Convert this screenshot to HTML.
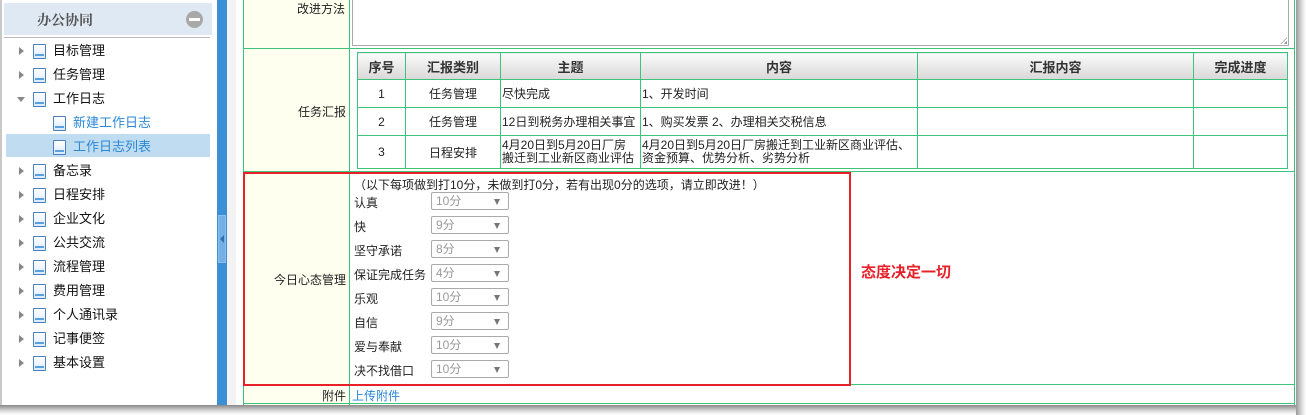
<!DOCTYPE html>
<html><head><meta charset="utf-8"><style>
*{margin:0;padding:0;box-sizing:border-box}
html,body{width:1306px;height:415px;overflow:hidden}
body{background:#fff;font:12px "Liberation Sans","Noto Sans CJK SC",sans-serif;color:#222;position:relative;white-space:nowrap}
.a{position:absolute}
.it{position:absolute;height:24px;width:200px;line-height:24px;font-size:13px;color:#111}
.it span{white-space:nowrap}
.arr{position:absolute;top:8px;width:0;height:0;border-left:5px solid #888;border-top:4px solid transparent;border-bottom:4px solid transparent}
.ic{position:absolute;top:5px;width:13px;height:15px;border:1px solid #4a7fc0;background:linear-gradient(#fff,#dbe9f8);border-radius:1px}
.ic:after{content:"";position:absolute;left:1px;right:1px;bottom:2px;height:2px;background:#5aa0e0}
.sel{position:absolute;width:78px;height:18px;border:1px solid #aaa;border-radius:2px;background:#fff;color:#999;font-size:12px;line-height:16px;padding-left:4px}
.sel:after{content:"";position:absolute;right:8px;top:6px;border-top:6px solid #777;border-left:3px solid transparent;border-right:3px solid transparent}
.lb{position:absolute;left:354px;font-size:12px;color:#222}
td,th{border:1px solid #3cc47c;font-size:12px;padding:0 1px;white-space:normal}
th{background:linear-gradient(#fbfbfb,#d8d8d8);font-weight:bold;color:#333;font-size:13px}
.t{position:absolute;left:53px}
#sb .it{margin-top:2px}
</style></head><body>
<div class="a" style="left:0;top:0;width:2px;height:405px;background:#c8c8c8"></div>
<div class="a" style="left:4px;top:3px;width:208px;height:32px;background:#dfe9f3"></div>
<div class="a" style="left:37px;top:10px;font-size:14px;font-weight:bold;color:#555;font-family:'Noto Serif CJK SC',serif">办公协同</div>
<div class="a" style="left:186px;top:11px;width:17px;height:17px;border-radius:50%;background:#a8a8a8"></div>
<div class="a" style="left:189px;top:18px;width:11px;height:3px;background:#fff"></div>
<div class="a" style="left:4px;top:37px;width:206px;height:1px;background:#bbb"></div>
<div class="a" style="left:6px;top:134px;width:204px;height:23px;background:#c0dcf0"></div>
<div id="sb">
<div class="it" style="top:37px;left:0"><span class="arr" style="left:19px"></span><span class="ic" style="left:33px"></span><span class="t">目标管理</span></div>
<div class="it" style="top:61px;left:0"><span class="arr" style="left:19px"></span><span class="ic" style="left:33px"></span><span class="t">任务管理</span></div>
<div class="it" style="top:85px;left:0"><span class="arr" style="left:17px;top:10px;border-left:4px solid transparent;border-right:4px solid transparent;border-top:5px solid #888;border-bottom:0"></span><span class="ic" style="left:33px"></span><span class="t">工作日志</span></div>
<div class="it" style="top:109px;left:0;color:#2a88d8"><span class="ic" style="left:53px"></span><span class="t" style="left:73px">新建工作日志</span></div>
<div class="it" style="top:133px;left:0;color:#2a88d8"><span class="ic" style="left:53px"></span><span class="t" style="left:73px">工作日志列表</span></div>
<div class="it" style="top:157px;left:0"><span class="arr" style="left:19px"></span><span class="ic" style="left:33px"></span><span class="t">备忘录</span></div>
<div class="it" style="top:181px;left:0"><span class="arr" style="left:19px"></span><span class="ic" style="left:33px"></span><span class="t">日程安排</span></div>
<div class="it" style="top:205px;left:0"><span class="arr" style="left:19px"></span><span class="ic" style="left:33px"></span><span class="t">企业文化</span></div>
<div class="it" style="top:229px;left:0"><span class="arr" style="left:19px"></span><span class="ic" style="left:33px"></span><span class="t">公共交流</span></div>
<div class="it" style="top:253px;left:0"><span class="arr" style="left:19px"></span><span class="ic" style="left:33px"></span><span class="t">流程管理</span></div>
<div class="it" style="top:277px;left:0"><span class="arr" style="left:19px"></span><span class="ic" style="left:33px"></span><span class="t">费用管理</span></div>
<div class="it" style="top:301px;left:0"><span class="arr" style="left:19px"></span><span class="ic" style="left:33px"></span><span class="t">个人通讯录</span></div>
<div class="it" style="top:325px;left:0"><span class="arr" style="left:19px"></span><span class="ic" style="left:33px"></span><span class="t">记事便签</span></div>
<div class="it" style="top:349px;left:0"><span class="arr" style="left:19px"></span><span class="ic" style="left:33px"></span><span class="t">基本设置</span></div>
</div>
<div class="a" style="left:217px;top:0;width:10px;height:405px;background:#3a8fd6"></div>
<div class="a" style="left:218px;top:215px;width:8px;height:48px;background:#72b0e6;border:1px solid #8cc0ec"></div>
<div class="a" style="left:220px;top:235px;border-right:4px solid #2f6fb0;border-top:4px solid transparent;border-bottom:4px solid transparent"></div>
<div class="a" style="left:227px;top:0;width:9px;height:405px;background:#f3f3f3"></div>
<div class="a" style="left:243px;top:0;width:107px;height:405px;background:#fffff0"></div>
<div class="a" style="left:243px;top:0;width:1px;height:405px;background:#3cc47c"></div>
<div class="a" style="left:349px;top:0;width:1px;height:405px;background:#3cc47c"></div>
<div class="a" style="left:1294px;top:0;width:1px;height:405px;background:#3cc47c"></div>
<div class="a" style="left:243px;top:48px;width:1052px;height:1px;background:#3cc47c"></div>
<div class="a" style="left:243px;top:171px;width:1052px;height:1px;background:#3cc47c"></div>
<div class="a" style="left:243px;top:384px;width:1052px;height:1px;background:#3cc47c"></div>
<div class="a" style="left:243px;top:403px;width:1052px;height:1px;background:#3cc47c"></div>
<div class="a" style="left:297px;top:0px;font-size:12px">改进方法</div>
<div class="a" style="left:352px;top:-2px;width:937px;height:48px;border:1px solid #aaa"></div>
<div class="a" style="left:1280px;top:37px;width:7px;height:7px;background:linear-gradient(135deg,transparent 50%,#999 50%,#999 60%,transparent 60%,transparent 75%,#999 75%)"></div>
<div class="a" style="left:298px;top:103px">任务汇报</div>
<table class="a" style="left:357px;top:52px;width:930px;border-collapse:collapse;table-layout:fixed">
<colgroup><col style="width:48px"><col style="width:95px"><col style="width:140px"><col style="width:277px"><col style="width:276px"><col style="width:94px"></colgroup>
<tr style="height:27px"><th>序号</th><th>汇报类别</th><th>主题</th><th>内容</th><th>汇报内容</th><th>完成进度</th></tr>
<tr style="height:28px"><td align="center">1</td><td align="center">任务管理</td><td>尽快完成</td><td>1、开发时间</td><td></td><td></td></tr>
<tr style="height:28px"><td align="center">2</td><td align="center">任务管理</td><td style="white-space:nowrap;overflow:hidden">12日到税务办理相关事宜</td><td>1、购买发票 2、办理相关交税信息</td><td></td><td></td></tr>
<tr style="height:33px"><td align="center">3</td><td align="center">日程安排</td><td style="line-height:13px">4月20日到5月20日厂房<br>搬迁到工业新区商业评估</td><td style="line-height:13px">4月20日到5月20日厂房搬迁到工业新区商业评估、<br>资金预算、优势分析、劣势分析</td><td></td><td></td></tr>
</table>
<div class="a" style="left:243px;top:172px;width:608px;height:214px;border:2px solid #e8202a"></div>
<div class="a" style="left:274px;top:271px">今日心态管理</div>
<div class="lb" style="top:176px">（以下每项做到打10分，未做到打0分，若有出现0分的选项，请立即改进！）</div>
<div class="lb" style="top:194px">认真</div><div class="sel" style="left:431px;top:192px">10分</div>
<div class="lb" style="top:218px">快</div><div class="sel" style="left:431px;top:216px">9分</div>
<div class="lb" style="top:242px">坚守承诺</div><div class="sel" style="left:431px;top:240px">8分</div>
<div class="lb" style="top:266px">保证完成任务</div><div class="sel" style="left:431px;top:264px">4分</div>
<div class="lb" style="top:290px">乐观</div><div class="sel" style="left:431px;top:288px">10分</div>
<div class="lb" style="top:314px">自信</div><div class="sel" style="left:431px;top:312px">9分</div>
<div class="lb" style="top:338px">爱与奉献</div><div class="sel" style="left:431px;top:336px">10分</div>
<div class="lb" style="top:362px">决不找借口</div><div class="sel" style="left:431px;top:360px">10分</div>
<div class="a" style="left:861px;top:261px;color:#e8202a;font-size:15px;font-weight:bold">态度决定一切</div>
<div class="a" style="left:322px;top:387px">附件</div>
<div class="a" style="left:352px;top:387px;color:#2a88d8">上传附件</div>
<div class="a" style="left:0;top:405px;width:1306px;height:10px;background:linear-gradient(#888,#ddd 60%,#fff)"></div>
<div class="a" style="left:1296px;top:0;width:10px;height:415px;background:linear-gradient(90deg,#999,#ddd 60%,#fff)"></div>
</body></html>
